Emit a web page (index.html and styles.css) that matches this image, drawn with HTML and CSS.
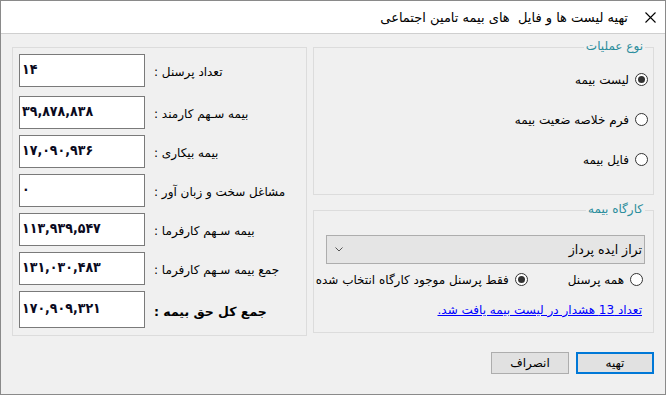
FILE: index.html
```html
<!DOCTYPE html>
<html lang="fa">
<head>
    <meta charset="UTF-8">
    <meta name="viewport" content="width=device-width, initial-scale=1.0">
    <title>تهیه لیست ها و فایل های بیمه تامین اجتماعی</title>
    <link rel="stylesheet" href="styles.css">
</head>
<body>
    <div class="window">
        <div class="titlebar">
            <span class="title" dir="rtl">تهیه لیست ها و فایل  های بیمه تامین اجتماعی</span>
            <svg class="close" width="11" height="11" viewBox="0 0 11 11">
                <path d="M0.5 0.5 L10.5 10.5 M10.5 0.5 L0.5 10.5" stroke="#000" stroke-width="1.1" fill="none"/>
            </svg>
        </div>

        <div class="content">
            <div class="main">
                <div class="panel summary">
                    <div class="row">
                        <div class="box" dir="ltr">۱۴</div>
                        <label class="caption" dir="rtl">تعداد پرسنل :</label>
                    </div>
                    <div class="row row-second">
                        <div class="box" dir="ltr">۳۹,۸۷۸,۸۳۸</div>
                        <label class="caption" dir="rtl">بیمه سـهم کارمند :</label>
                    </div>
                    <div class="row">
                        <div class="box" dir="ltr">۱۷,۰۹۰,۹۳۶</div>
                        <label class="caption" dir="rtl">بیمه بیکاری :</label>
                    </div>
                    <div class="row">
                        <div class="box" dir="ltr">۰</div>
                        <label class="caption" dir="rtl">مشاغل سخت و زبان آور :</label>
                    </div>
                    <div class="row">
                        <div class="box" dir="ltr">۱۱۳,۹۳۹,۵۴۷</div>
                        <label class="caption" dir="rtl">بیمه سـهم کارفرما :</label>
                    </div>
                    <div class="row">
                        <div class="box" dir="ltr">۱۳۱,۰۳۰,۴۸۳</div>
                        <label class="caption" dir="rtl">جمع بیمه سـهم کارفرما :</label>
                    </div>
                    <div class="row row-total">
                        <div class="box" dir="ltr">۱۷۰,۹۰۹,۳۲۱</div>
                        <label class="caption caption-total" dir="rtl">جمع کل حق بیمه :</label>
                    </div>
                </div>

                <div class="side">
                    <div class="panel group ops">
                        <span class="group-title">نوع عملیات</span>
                        <div class="radio-list">
                            <div class="radio"><span class="dot checked"></span><span>لیست بیمه</span></div>
                            <div class="radio"><span class="dot"></span><span>فرم خلاصه ضعیت بیمه</span></div>
                            <div class="radio"><span class="dot"></span><span>فایل بیمه</span></div>
                        </div>
                    </div>

                    <div class="panel group workshop">
                        <span class="group-title">کارگاه بیمه</span>
                        <div class="combo">
                            <span dir="rtl">تراز ایده پرداز</span>
                            <svg width="8" height="5" viewBox="0 0 8 5">
                                <path d="M0.5 0.5 L4 4 L7.5 0.5" stroke="#555" stroke-width="1" fill="none"/>
                            </svg>
                        </div>
                        <div class="radio-row">
                            <div class="radio"><span class="dot"></span><span>همه پرسنل</span></div>
                            <div class="radio"><span class="dot checked"></span><span class="tight">فقط پرسنل موجود کارگاه انتخاب شده</span></div>
                        </div>
                        <a class="warn-link" href="#" dir="rtl">تعداد 13 هشدار در لیست بیمه یافت شد.</a>
                    </div>
                </div>
            </div>

            <div class="buttons">
                <button type="button" class="btn">انصراف</button>
                <button type="button" class="btn btn-default">تهیه</button>
            </div>
        </div>
    </div>
</body>
</html>
```

FILE: styles.css
```css
html, body {
    margin: 0;
    padding: 0;
}
body {
    font-family: "DejaVu Sans", sans-serif;
    font-size: 12px;
    color: #000;
}
.window {
    width: 666px;
    height: 395px;
    box-sizing: border-box;
    border: 1px solid #8a8a8a;
    background-color: #f0f0f0;
    display: flex;
    flex-direction: column;
}
.titlebar {
    height: 32px;
    background-color: #fff;
    border-bottom: 1px solid #cfcfcf;
    display: flex;
    align-items: center;
    justify-content: flex-end;
    gap: 17px;
    padding-right: 9px;
}
.title {
    white-space: pre;
    font-size: 13px;
}
.content {
    padding: 13px 11px 0 11px;
}
.main {
    display: flex;
    gap: 6px;
}
.panel {
    border: 1px solid #dcdcdc;
    box-sizing: border-box;
}
.summary {
    width: 295px;
    height: 289px;
    padding: 6px 6px 0 6px;
    display: flex;
    flex-direction: column;
    gap: 6px;
}
.row {
    display: flex;
    align-items: center;
    gap: 9px;
}
.row-second {
    margin-top: 3px;
}
.box {
    width: 126px;
    height: 33px;
    box-sizing: border-box;
    border: 1px solid #7a7a7a;
    background-color: #fff;
    padding: 5px 2px 0 2px;
    font-family: "DejaVu Sans Condensed", "DejaVu Sans", sans-serif;
    font-weight: bold;
    font-size: 14px;
    letter-spacing: -1.6px;
    line-height: 18px;
    text-align: left;
    color: #0a0a1e;
}
.row-total .box {
    height: 37px;
    padding-top: 7px;
}
.caption {
    font-size: 12px;
    text-align: left;
    margin-top: 3px;
    white-space: nowrap;
}
.caption-total {
    font-weight: bold;
    font-size: 12.5px;
}
.side {
    width: 341px;
    display: flex;
    flex-direction: column;
    gap: 15px;
}
.group {
    position: relative;
}
.group-title {
    position: absolute;
    top: -9px;
    right: 8px;
    padding: 0 2px;
    background-color: #f0f0f0;
    color: #2a8d9c;
    direction: rtl;
}
.ops {
    height: 148px;
    padding: 25px 5px 0 0;
}
.radio-list {
    display: flex;
    flex-direction: column;
    align-items: flex-end;
    gap: 27px;
}
.radio {
    display: flex;
    flex-direction: row;
    align-items: center;
    gap: 6px;
    direction: rtl;
    height: 13px;
    white-space: nowrap;
}
.tight {
    letter-spacing: -0.4px;
}
.dot {
    width: 13px;
    height: 13px;
    box-sizing: border-box;
    border: 1px solid #333;
    border-radius: 50%;
    background-color: #fff;
    position: relative;
    flex: none;
}
.dot.checked::after {
    content: "";
    position: absolute;
    left: 2px;
    top: 2px;
    width: 7px;
    height: 7px;
    border-radius: 50%;
    background-color: #333;
}
.workshop {
    height: 123px;
    padding: 24px 8px 0 12px;
    display: flex;
    flex-direction: column;
}
.combo {
    height: 29px;
    box-sizing: border-box;
    border: 1px solid #adadad;
    background-color: #e5e5e5;
    display: flex;
    flex-direction: row-reverse;
    justify-content: space-between;
    align-items: center;
    padding: 0 2px 0 8px;
    font-size: 12.5px;
}
.radio-row {
    display: flex;
    flex-direction: row-reverse;
    gap: 40px;
    margin: 9px 2px 0 0;
}
.warn-link {
    align-self: flex-end;
    margin: 17px 3px 0 0;
    color: #0000ff;
    text-decoration: underline;
}
.buttons {
    display: flex;
    justify-content: flex-end;
    gap: 7px;
    margin-top: 16px;
}
.btn {
    width: 78px;
    height: 22px;
    box-sizing: border-box;
    border: 1px solid #adadad;
    background-color: #e1e1e1;
    font-family: "DejaVu Sans", sans-serif;
    font-size: 12px;
    padding: 0;
    cursor: pointer;
}
.btn-default {
    border: 2px solid #0078d7;
}
```
